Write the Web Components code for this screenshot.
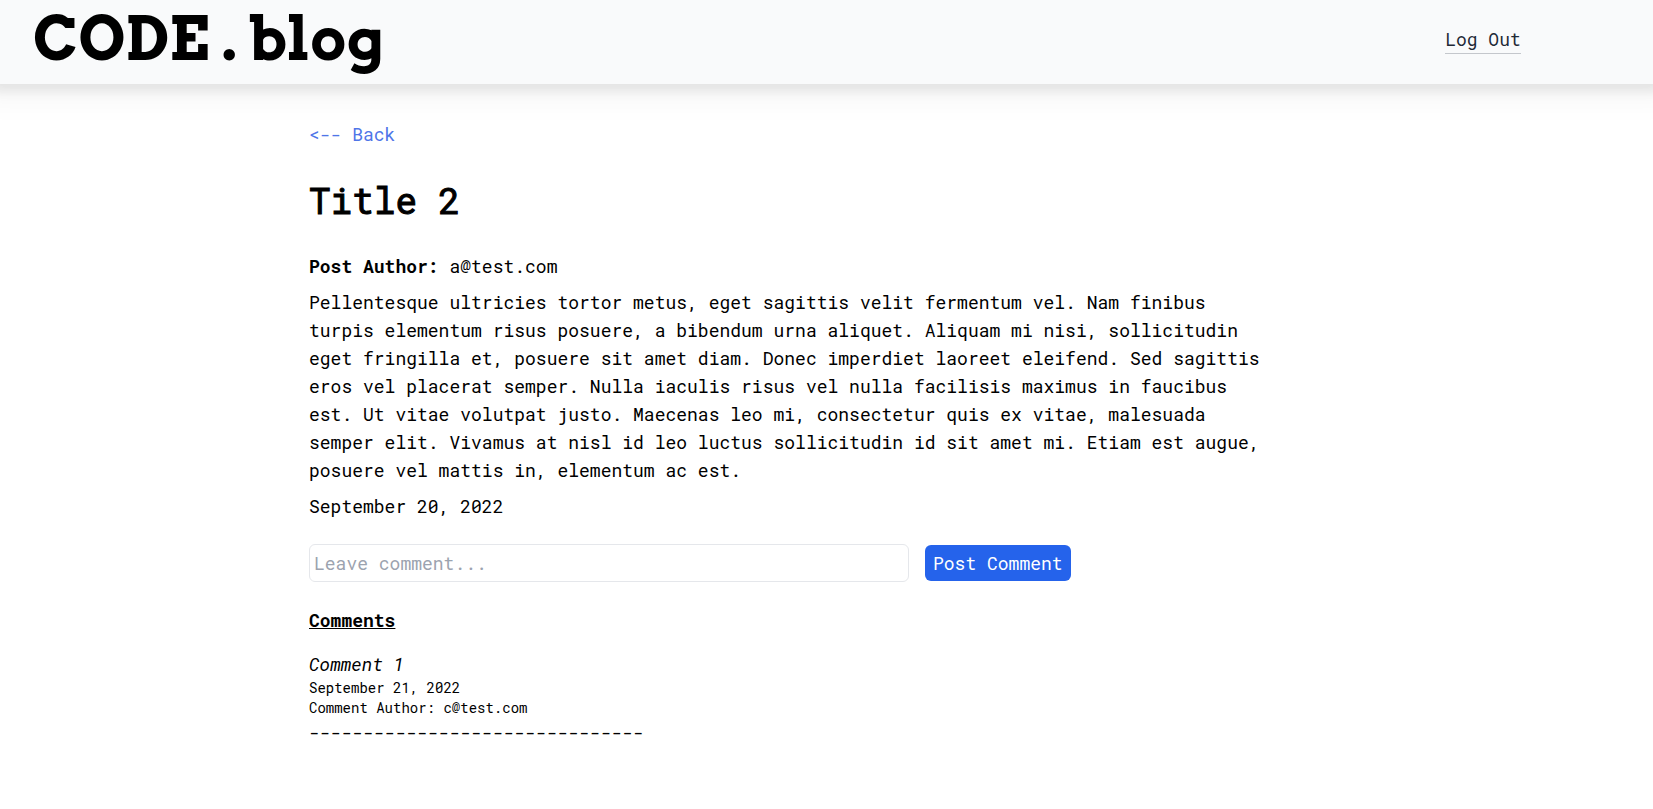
<!DOCTYPE html>
<html lang="en">
<head>
<meta charset="utf-8">
<meta name="viewport" content="width=device-width, initial-scale=1">
<title>CODE.blog</title>
<style>
  body { margin: 0; background: #fff; color: #000; font: 18px/28px "Roboto Mono", "Liberation Mono", monospace; }
</style>
</head>
<body>
<blog-app></blog-app>
<script>
  const define = (name, html) => {
    const template = document.createElement('template');
    template.innerHTML = html;
    customElements.define(name, class extends HTMLElement {
      constructor() {
        super();
        this.attachShadow({ mode: 'open' }).append(template.content.cloneNode(true));
      }
    });
  };

  define('site-header', `
    <style>
      :host { display: block; background: #f9fafb; box-shadow: 0 0 26px 20px rgb(0 0 0 / .03), 0 0 10px 8px rgb(0 0 0 / .08); }
      header { display: flex; align-items: center; justify-content: space-between; padding: 0 8% 6px 33px; }
      .logo { color: #000; text-decoration: none; font: bold 60px/78px Arvo, "DejaVu Serif Condensed", "DejaVu Serif", serif; }
      .out { color: #1f2937; text-decoration: none; border-bottom: 1px solid #c4c7cc; }
    </style>
    <header>
      <a class="logo" href="#"><slot></slot></a>
      <a class="out" href="#">Log Out</a>
    </header>`);

  define('blog-post', `
    <style>
      :host { display: block; }
      h1 { margin: 0 0 32px; font-size: 36px; line-height: 40px; font-weight: 400; -webkit-text-stroke: 1px currentColor; }
      p { margin: 0 0 8px; max-width: 960px; }
    </style>
    <article>
      <h1><slot name="title"></slot></h1>
      <p><b>Post Author:</b> <slot name="author"></slot></p>
      <p><slot></slot></p>
      <p><slot name="date"></slot></p>
    </article>`);

  define('comment-form', `
    <style>
      :host { display: block; }
      form { display: flex; align-items: center; gap: 16px; }
      input { box-sizing: border-box; width: 600px; min-width: 0; height: 38px; padding: 4px; border: 1px solid #e5e7eb; border-radius: 6px; font: inherit; color: inherit; background: #fff; }
      input::placeholder { color: #9ca3af; opacity: 1; }
      button { border: 0; border-radius: 6px; padding: 4px 8px; background: #2563eb; color: #fff; font: inherit; white-space: nowrap; }
    </style>
    <form>
      <input type="text" placeholder="Leave comment..." aria-label="Leave comment">
      <button type="button">Post Comment</button>
    </form>`);

  define('post-comment', `
    <style>
      :host { display: block; }
      p { margin: 0; }
      .text { font-style: italic; }
      .meta { font-size: 14px; line-height: 20px; }
    </style>
    <p class="text"><slot></slot></p>
    <p class="meta"><slot name="date"></slot></p>
    <p class="meta">Comment Author: <slot name="author"></slot></p>
    <p>-------------------------------</p>`);

  define('blog-app', `
    <style>
      :host { display: block; }
      main { max-width: 1035px; margin: 0 auto; padding: 36px 16px; }
      @media (min-width: 1067px) { main { padding: 36px 0; } }
      .back { display: inline-block; color: #4f75e8; text-decoration: none; margin-bottom: 32px; }
      comment-form { margin-top: 24px; }
      h2 { margin: 24px 0 16px; font-size: 18px; line-height: 28px; text-decoration: underline; }
    </style>
    <site-header>CODE . blog</site-header>
    <main>
      <a class="back" href="#">&lt;-- Back</a>
      <blog-post>
        <span slot="title">Title 2</span>
        <span slot="author">a@test.com</span>
        Pellentesque ultricies tortor metus, eget sagittis velit fermentum vel. Nam finibus turpis elementum risus posuere, a bibendum urna aliquet. Aliquam mi nisi, sollicitudin eget fringilla et, posuere sit amet diam. Donec imperdiet laoreet eleifend. Sed sagittis eros vel placerat semper. Nulla iaculis risus vel nulla facilisis maximus in faucibus est. Ut vitae volutpat justo. Maecenas leo mi, consectetur quis ex vitae, malesuada semper elit. Vivamus at nisl id leo luctus sollicitudin id sit amet mi. Etiam est augue, posuere vel mattis in, elementum ac est.
        <time slot="date" datetime="2022-09-20">September 20, 2022</time>
      </blog-post>
      <comment-form></comment-form>
      <h2>Comments</h2>
      <post-comment>
        Comment 1
        <time slot="date" datetime="2022-09-21">September 21, 2022</time>
        <span slot="author">c@test.com</span>
      </post-comment>
    </main>`);
</script>
</body>
</html>
